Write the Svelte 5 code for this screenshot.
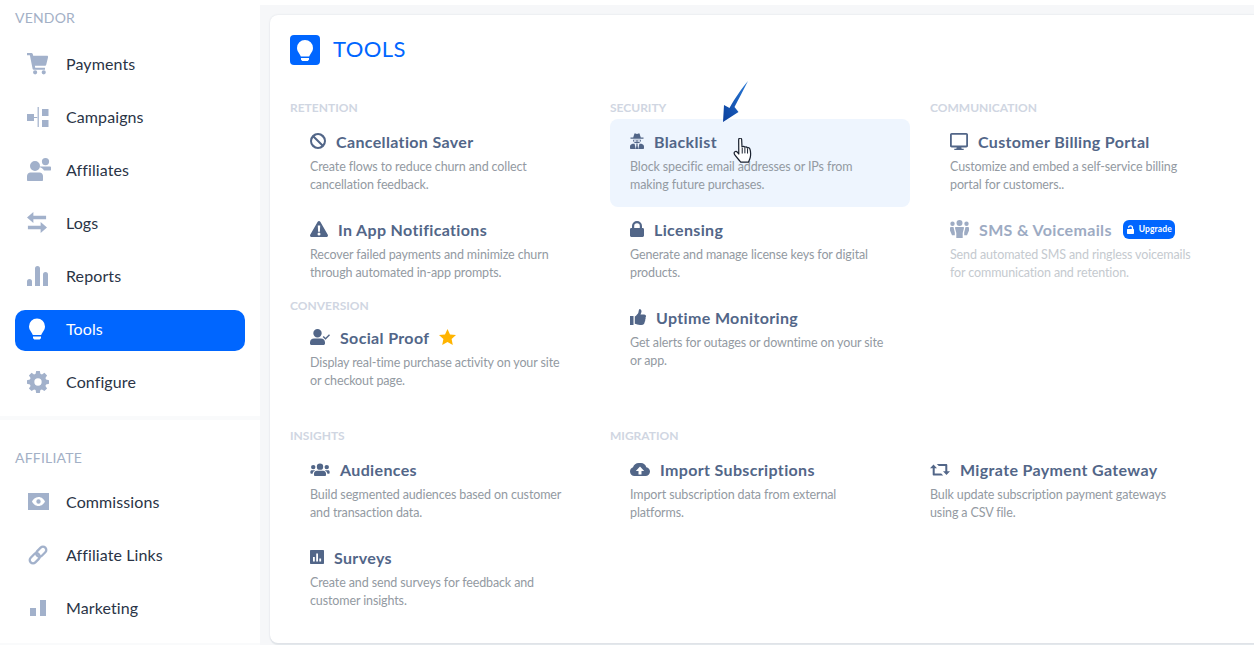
<script>
  const vendorNav = [
    { label: 'Payments', icon: 'cart' },
    { label: 'Campaigns', icon: 'campaigns' },
    { label: 'Affiliates', icon: 'people' },
    { label: 'Logs', icon: 'logs' },
    { label: 'Reports', icon: 'reports' },
    { label: 'Tools', icon: 'bulb', active: true },
    { label: 'Configure', icon: 'gear' }
  ];
  const affiliateNav = [
    { label: 'Commissions', icon: 'bill' },
    { label: 'Affiliate Links', icon: 'link' },
    { label: 'Marketing', icon: 'marketing' }
  ];

  const paths = {
    cart: 'M0 0h4.6c.7 0 1.2.4 1.4 1l.5 2H21c.7 0 1.2.7 1 1.4l-1.9 8c-.1.6-.6 1-1.2 1H8.2l.4 2h10.2v2H7c-.5 0-1-.3-1.1-.8L3 2.4H0z M8.5 18a2.2 2.2 0 1 0 0 4.4 2.2 2.2 0 0 0 0-4.4z M17.5 18a2.2 2.2 0 1 0 0 4.4 2.2 2.2 0 0 0 0-4.4z',
    campaigns: 'M0 7h7v7H0z M7 10h4v1H7z M10.6 0h1.2v20h-1.2z M15 2h6.5v7H15z M15 13h6.5v7H15z',
    people: 'M8 3a5 5 0 1 1 0 10A5 5 0 0 1 8 3z M3.5 14.5h9c2 0 3.5 1.6 3.5 3.5v4c0 .6-.4 1-1 1H1c-.6 0-1-.4-1-1v-4c0-1.9 1.6-3.5 3.5-3.5z M18.5 0a3.6 3.6 0 1 1 0 7.2 3.6 3.6 0 0 1 0-7.200z M13 8.500h10c.5 0 1 .4 1 1v2.500c0 .3-.2.500-.5.500H17c-.7-1.500-2.300-2.600-4-3.200z',
    logs: 'M7 0v4h14v4H7v4L0 6z M15 11l7 6-7 6v-4H1v-4h14z',
    reports: 'M2.500 13a2.500 2.500 0 0 1 2.500 2.500V20H0v-4.500A2.500 2.500 0 0 1 2.500 13z M10.500 0A2.500 2.500 0 0 1 13 2.500V20H8V2.500A2.500 2.500 0 0 1 10.500 0z M18.500 6A2.500 2.500 0 0 1 21 8.500V20h-5V8.500A2.500 2.500 0 0 1 18.500 6z',
    bulb: 'M8 0a8 8 0 0 1 8 8c0 2.300-1 3.800-2 5.200-.8 1.100-1.500 2.200-1.800 3.300H3.800c-.3-1.100-1-2.200-1.800-3.300C1 11.800 0 10.300 0 8a8 8 0 0 1 8-8z M4 18h8v1.200c0 .3-.1.500-.3.700l-1 1c-.2.100-.4.200-.7.200H6c-.3 0-.5-.1-.7-.2l-1-1c-.2-.2-.3-.4-.3-.7z',
    gear: 'M9 0h4l.6 3.100 1.700.7L18 2l2.900 2.900-1.800 2.700.7 1.700L23 10v4l-3.200.6-.7 1.700 1.800 2.700L18 21.900l-2.700-1.800-1.700.7L13 24H9l-.6-3.200-1.700-.7L4 21.900 1.100 19l1.800-2.700-.7-1.700L-1 14v-4l3.200-.7.700-1.700L1.100 4.900 4 2l2.700 1.800 1.700-.7z M11 8a4 4 0 1 0 0 8 4 4 0 0 0 0-8z',
    bill: 'M0 0h21v17H0z M10.500 4c-3.200 0-5.600 2.400-6.500 4.500.9 2.100 3.300 4.500 6.500 4.500s5.600-2.400 6.500-4.500C16.100 6.400 13.700 4 10.500 4z M10.500 6.300a2.200 2.200 0 1 1 0 4.400 2.200 2.200 0 0 1 0-4.400z',
    marketing: 'M0 8h6v8H0z M10 0h6v16h-6z',
    ban: 'M8 0a8 8 0 1 1 0 16A8 8 0 0 1 8 0z M4.670 3.250A5.800 5.800 0 0 1 12.750 11.330z M3.250 4.670A5.800 5.800 0 0 0 11.330 12.750z',
    warn: 'M9 0c.5 0 1 .3 1.300.8l7.500 13c.5 1-.2 2.200-1.300 2.200h-15C.4 16-.3 14.800.2 13.800L7.700.800C8 .3 8.500 0 9 0z M7.800 4.500l.3 6.200h1.800l.3-6.200z M9 11.500a1.500 1.500 0 1 0 0 3 1.500 1.500 0 0 0 0-3z',
    spy: 'M3.200 4.500L4.400.8c.1-.4.5-.6.9-.4L7 1l1.700-.6c.4-.2.8 0 .9.4l1.200 3.700h2.700v1.300H.5V4.500z M3 6.800h8c0 2.200-1.700 3.600-4 3.600S3 9 3 6.800z M4 7.300v1.400h2.500V7.300z M7.500 7.300v1.400H10V7.300z M2.600 10.800h2L5.700 16H1c-.6 0-1-.4-1-1v-1.500c0-1.200 1.100-2.200 2.600-2.700z M9.400 10.800h2c1.500.5 2.600 1.500 2.600 2.700V15c0 .6-.4 1-1 1H8.300z M6 11.200h2l-.4 1 .6 3.800H5.800l.6-3.800z',
    lock: 'M7 0a5 5 0 0 1 5 5v2h.7c.7 0 1.300.6 1.300 1.400v6.200c0 .8-.6 1.400-1.300 1.400H1.300C.6 16 0 15.400 0 14.600V8.400C0 7.600.6 7 1.300 7H2V5a5 5 0 0 1 5-5z M7 2.200A2.800 2.800 0 0 0 4.200 5v2h5.600V5A2.800 2.800 0 0 0 7 2.200z',
    thumb: 'M0 7h3.500v9H0z M9.500 0c1.200 0 2 1 2 2.300 0 1.100-.6 2.200-1 3.200h3.700c1 0 1.800.8 1.800 1.700 0 .6-.2 1-.5 1.400.3.900.1 1.600-.3 2.100.2.900 0 1.600-.6 2.200.1 1.500-.8 3.100-3.300 3.100H10c-2 0-3.800-1-5.200-1.200V7.400C6 6.800 7 5.500 8 4.400 8.800 3.400 8.400 1 9.500 0z',
    monitor: 'M1.700 0h14.600C17.200 0 18 .8 18 1.700v11c0 .9-.8 1.700-1.700 1.700h-5l.4 1.400h2v1.400H4.300v-1.400h2l.4-1.400h-5C.8 14.400 0 13.600 0 12.700v-11C0 .8.800 0 1.700 0z M1.800 1.800v10.800h14.400V1.800z',
    team: 'M9.500 0a3 3 0 1 1 0 6 3 3 0 0 1 0-6z M2.500 1.500a2.200 2.200 0 1 1 0 4.400 2.200 2.200 0 0 1 0-4.400z M16.500 1.500a2.200 2.200 0 1 1 0 4.400 2.200 2.200 0 0 1 0-4.400z M6 7h7c.6 0 1 .4 1 1l-1.300 5v5H6.300v-5L5 8c0-.6.400-1 1-1z M.500 7H3.500l1.300 5.500v2.700H2L0 10.500V8z M15.500 7h3l.500 1v2.500L17 15.200h-2.800v-2.700z',
    usercheck: 'M7.500 0a4.200 4.200 0 1 1 0 8.400A4.200 4.200 0 0 1 7.500 0z M4 9.500h7c2.200 0 4 1.700 4 3.900v1.100c0 .8-.7 1.500-1.500 1.500h-12C.7 16 0 15.300 0 14.500v-1.100c0-2.200 1.800-3.900 4-3.900z M19 5.300l1 1-4.500 4.400-2.800-2.800 1-1 1.800 1.800z',
    star: 'M8.500 0l2.500 5.400 6 .7-4.400 4 1.200 5.900-5.300-3-5.300 3 1.200-5.900L0 6.100l6-.7z',
    users: 'M10 1.500a3.300 3.300 0 1 1 0 6.600 3.300 3.300 0 0 1 0-6.600z M3 3a2.300 2.300 0 1 1 0 4.600A2.300 2.300 0 0 1 3 3z M17 3a2.300 2.300 0 1 1 0 4.600A2.300 2.300 0 0 1 17 3z M6.800 9h6.400c1.800 0 3 1.300 3 3v1.500c0 .5-.4 1-1 1H4.800c-.6 0-1-.5-1-1V12c0-1.700 1.200-3 3-3z M1.500 8.500h2.700c.3 0 .6.100.8.300-1.500.6-2.500 1.800-2.700 3.400H1c-.6 0-1-.4-1-1v-1.100c0-.9.600-1.600 1.500-1.600z M15.800 8.500h2.700c.9 0 1.500.7 1.500 1.600v1.100c0 .6-.4 1-1 1h-1.300c-.2-1.600-1.200-2.800-2.700-3.400.2-.2.500-.3.800-.3z',
    poll: 'M1 0h12c.6 0 1 .4 1 1v12c0 .6-.4 1-1 1H1c-.6 0-1-.4-1-1V1c0-.6.4-1 1-1z M3 7v4.500h1.800V7z M6.200 3.500v8H8v-8z M9.300 8.500v3h1.800v-3z',
    cloud: 'M11 0c2.500 0 4.700 1.700 5.300 4.200 2.100.3 3.700 2.100 3.700 4.300 0 2.500-2 4.500-4.500 4.500h-11C2 13 0 11 0 8.500c0-1.900 1.200-3.600 3-4.200C3.800 1.800 6 0 8.700 0z M10 3.500L5.800 8H8.500v3.500h3V8h2.700z',
    retweet: 'M3.500 1.500L7 5.300H4.700v5.200h6.500l2 2H3.800c-.6 0-1.100-.5-1.100-1.100V5.300H0z M6.800 1h9.400c.6 0 1.100.5 1.100 1.100v6.100H20l-3.500 3.800L13 8.200h2.300V3H8.800z',
    padlock: 'M4 0a3 3 0 0 1 3 3v1.500h.3c.4 0 .7.300.7.700v4c0 .4-.3.800-.7.800H.7C.3 10 0 9.600 0 9.200v-4c0-.4.300-.7.700-.7h4.800V3a1.500 1.500 0 0 0-3 0H1.100A2.900 2.900 0 0 1 4 0z'
  };

  const sections = [
    [
      { heading: 'RETENTION', items: [
        { title: 'Cancellation Saver', desc: 'Create flows to reduce churn and collect cancellation feedback.', icon: 'ban', w: 16, h: 16, vb: '0 0 16 16' },
        { title: 'In App Notifications', desc: 'Recover failed payments and minimize churn through automated in-app prompts.', icon: 'warn', w: 18, h: 16, vb: '0 0 18 16' }
      ] },
      { heading: 'CONVERSION', tight: true, items: [
        { title: 'Social Proof', desc: 'Display real-time purchase activity on your site or checkout page.', icon: 'usercheck', w: 20, h: 16, vb: '0 0 20 16', star: true }
      ] }
    ],
    [
      { heading: 'SECURITY', items: [
        { title: 'Blacklist', desc: 'Block specific email addresses or IPs from making future purchases.', icon: 'spy', w: 14, h: 16, vb: '0 0 14 16', hover: true },
        { title: 'Licensing', desc: 'Generate and manage license keys for digital products.', icon: 'lock', w: 14, h: 16, vb: '0 0 14 16' },
        { title: 'Uptime Monitoring', desc: 'Get alerts for outages or downtime on your site or app.', icon: 'thumb', w: 16, h: 16, vb: '0 0 16 16' }
      ] }
    ],
    [
      { heading: 'COMMUNICATION', items: [
        { title: 'Customer Billing Portal', desc: 'Customize and embed a self-service billing portal for customers..', icon: 'monitor', w: 18, h: 17, vb: '0 0 18 17' },
        { title: 'SMS & Voicemails', desc: 'Send automated SMS and ringless voicemails for communication and retention.', icon: 'team', w: 19, h: 18, vb: '0 0 19 18', locked: true }
      ] }
    ],
    [
      { heading: 'INSIGHTS', items: [
        { title: 'Audiences', desc: 'Build segmented audiences based on customer and transaction data.', icon: 'users', w: 20, h: 14, vb: '0 0 20 14.500' },
        { title: 'Surveys', desc: 'Create and send surveys for feedback and customer insights.', icon: 'poll', w: 14, h: 14, vb: '0 0 14 14' }
      ] }
    ],
    [
      { heading: 'MIGRATION', items: [
        { title: 'Import Subscriptions', desc: 'Import subscription data from external platforms.', icon: 'cloud', w: 20, h: 13, vb: '0 0 20 13' }
      ] }
    ],
    [
      { heading: '', shifted: true, items: [
        { title: 'Migrate Payment Gateway', desc: 'Bulk update subscription payment gateways using a CSV file.', icon: 'retweet', w: 20, h: 13, vb: '0 0 20 13' }
      ] }
    ]
  ];

  const navBoxes = {
    cart: '0 0 23 23', campaigns: '0 0 22 20', people: '0 0 24 23', logs: '0 0 22 23', reports: '0 0 21 20',
    bulb: '0 0 16 21', gear: '-1 0 24 24', bill: '0 0 21 17', link: '0 0 20 20', marketing: '0 0 16 16'
  };
  const navSizes = {
    cart: [22, 22], campaigns: [22, 20], people: [24, 23], logs: [20, 21], reports: [21, 20],
    bulb: [16, 22], gear: [22, 22], bill: [21, 17], link: [20, 20], marketing: [16, 16]
  };
</script>

{#snippet navItem(item)}
  <a class="nav-item" class:active={item.active} href="#{item.label}">
    <span class="nav-icon {item.icon}">
      <svg width={navSizes[item.icon][0]} height={navSizes[item.icon][1]} viewBox={navBoxes[item.icon]} fill="currentColor">
        {#if item.icon === 'link'}
          <g fill="none" stroke="currentColor" stroke-width="2.300">
            <rect x="1" y="10" width="11.500" height="6.600" rx="3.300" transform="rotate(-45 6.750 13.300)" />
            <rect x="7.500" y="3.400" width="11.500" height="6.600" rx="3.300" transform="rotate(-45 13.250 6.700)" />
          </g>
        {:else}
          <path fill-rule="evenodd" d={paths[item.icon]} />
        {/if}
      </svg>
    </span>
    {item.label}
  </a>
{/snippet}

<div class="page">
  <aside class="sidebar">
    <section class="side-group first">
      <h4>VENDOR</h4>
      <nav>
        {#each vendorNav as item}
          {@render navItem(item)}
        {/each}
      </nav>
    </section>
    <section class="side-group second">
      <h4>AFFILIATE</h4>
      <nav>
        {#each affiliateNav as item}
          {@render navItem(item)}
        {/each}
      </nav>
    </section>
  </aside>

  <main>
    <div class="topstrip"></div>
    <div class="card">
      <header>
        <span class="badge">
          <svg width="16" height="21" viewBox="0 0 16 21" fill="#fff"><path d={paths.bulb} /></svg>
        </span>
        <h1>TOOLS</h1>
      </header>

      <div class="grid">
        {#each sections as column}
          <div class="col">
            {#each column as group}
              <h5 class:tight={group.tight}>{group.heading}</h5>
              {#each group.items as tool}
                <div class="tool" class:hover={tool.hover} class:locked={tool.locked} class:shifted={group.shifted}>
                  <div class="tool-title">
                    <svg width={tool.w} height={tool.h} viewBox={tool.vb} fill="currentColor">
                      <path fill-rule="evenodd" d={paths[tool.icon]} />
                    </svg>
                    <span>{tool.title}</span>
                    {#if tool.star}
                      <svg class="star" width="17" height="16" viewBox="0 0 17 16" fill="#ffb400"><path d={paths.star} /></svg>
                    {/if}
                    {#if tool.locked}
                      <span class="upgrade">
                        <svg width="7" height="9" viewBox="0 0 8 10" fill="#fff"><path fill-rule="evenodd" d={paths.padlock} /></svg>
                        Upgrade
                      </span>
                    {/if}
                  </div>
                  <p>{tool.desc}</p>
                </div>
              {/each}
            {/each}
          </div>
        {/each}
      </div>
    </div>

    <!-- annotation arrow and pointer from the screenshot -->
    <svg class="arrow" width="30" height="46" viewBox="0 0 30 46">
      <defs>
        <linearGradient id="arrowFill" x1="1" y1="0" x2="0" y2="1">
          <stop offset="0" stop-color="#2a7bd8" />
          <stop offset="1" stop-color="#0b3f9c" />
        </linearGradient>
      </defs>
      <path d="M27 2C22 12 17 21 13.500 28L17.500 33 2 43 3 26 8.500 29C14 19 21 9 27 2z" fill="url(#arrowFill)" />
    </svg>
    <svg class="hand" width="20" height="25" viewBox="1 1 17 22.500">
      <path d="M6 1.500c.8-.8 2.200-.3 2.300 1l.3 6.500c1-.5 2-.4 2.500.3.900-.4 1.900-.2 2.300.6 1-.3 2 .1 2.300 1 .6 1.700.8 5 .4 7.400-.3 1.800-1 3-1.700 4.400H7.500c-1.500-1.800-4-4.500-5.500-6.700-.7-1.100-.6-2.200.2-2.700.9-.5 1.900 0 2.500.8l1 1.300L5.600 2.900c0-.6 0-1 .4-1.400z" fill="#fff" stroke="#1a2230" stroke-width="1.100" stroke-linejoin="round" />
      <path d="M8.800 10v5M11.200 9.800v5M13.600 10.400v4.600" fill="none" stroke="#1a2230" stroke-width=".9" />
    </svg>
  </main>
</div>

<style>
  :global(body) {
    background: #f6f7f9;
    overflow: hidden;
  }
  .page {
    display: flex;
    width: 1254px;
    height: 645px;
    overflow: hidden;
    font-family: Lato, "Open Sans", sans-serif;
  }
  .sidebar {
    width: 260px;
    flex: none;
    display: flex;
    flex-direction: column;
    gap: 4px;
    background: #f9fafb;
  }
  .side-group {
    background: #fff;
    padding-bottom: 12px;
  }
  .side-group.first { padding-top: 8px; }
  .side-group.second {
    padding-top: 28px;
    padding-bottom: 13px;
  }
  h4 {
    margin: 0 0 17px 15px;
    font-size: 14px;
    line-height: 20px;
    font-weight: 400;
    letter-spacing: 0.2px;
    color: #a3b0c6;
  }
  .second h4 { margin-bottom: 15px; }
  nav {
    display: flex;
    flex-direction: column;
    gap: 12px;
    padding: 0 15px;
  }
  .nav-item {
    display: flex;
    align-items: center;
    height: 41px;
    padding-left: 12px;
    padding-bottom: 4px;
    box-sizing: border-box;
    border-radius: 10px;
    font-size: 16px;
    letter-spacing: 0.1px;
    color: #2a3446;
    text-decoration: none;
  }
  .nav-icon {
    width: 24px;
    height: 24px;
    box-sizing: border-box;
    margin-right: 15px;
    display: flex;
    align-items: center;
    color: #a2b1cb;
  }
  .nav-icon.marketing { padding-left: 3px; }
  .nav-icon.bill,
  .nav-icon.link { padding-left: 1px; }
  .nav-item.active {
    background: #0066ff;
    color: #fff;
  }
  .nav-item.active .nav-icon {
    color: #fff;
    padding-left: 2px;
  }

  main {
    position: relative;
    flex: 1;
    padding: 0 5px 0 10px;
  }
  .topstrip {
    height: 5px;
    margin: 0 -5px 10px -10px;
    background: #fff;
  }
  .card {
    height: 628px;
    box-sizing: border-box;
    padding: 20px;
    background: #fff;
    border-radius: 8px;
    box-shadow: 0 0 2px #d9dde3, 0 2px 1px #e3e6ea;
  }
  header {
    display: flex;
    align-items: center;
    gap: 13px;
    height: 30px;
    margin-bottom: 32px;
  }
  .badge {
    width: 30px;
    height: 30px;
    border-radius: 4px;
    background: #0066ff;
    display: flex;
    align-items: center;
    justify-content: center;
  }
  h1 {
    margin: 0;
    padding-bottom: 4px;
    font-size: 22px;
    font-weight: 400;
    letter-spacing: 0.4px;
    color: #0066ff;
  }
  .grid {
    display: grid;
    grid-template-columns: repeat(3, 320px);
    row-gap: 22px;
  }
  h5 {
    margin: 0 0 2px;
    height: 20px;
    font-size: 12px;
    line-height: 22px;
    font-weight: 700;
    color: #d0d6e2;
  }
  h5.tight { margin-bottom: 0; }
  .tool {
    width: 300px;
    height: 88px;
    box-sizing: border-box;
    padding: 12px 20px 0;
    border-radius: 8px;
  }
  .tool.hover { background: #eef5fe; }
  .tool.shifted { margin-left: -20px; }
  .tool-title {
    display: flex;
    align-items: center;
    gap: 10px;
    height: 20px;
    font-size: 16px;
    font-weight: 700;
    letter-spacing: 0.35px;
    color: #526688;
  }
  .tool p {
    margin: 7px 0 0;
    max-width: 255px;
    font-size: 12.500px;
    line-height: 18px;
    letter-spacing: -0.12px;
    color: #939aa2;
  }
  .tool.locked .tool-title { color: #9dabc3; }
  .tool.locked p { color: #c5cacf; }
  .upgrade {
    display: flex;
    align-items: center;
    gap: 5px;
    height: 19px;
    margin-left: 1px;
    padding: 0 3px 0 4px;
    border-radius: 6px;
    background: #0066ff;
    font-size: 8.500px;
    letter-spacing: 0.1px;
    color: #fff;
  }
  .arrow {
    position: absolute;
    left: 461px;
    top: 79px;
  }
  .hand {
    position: absolute;
    left: 473px;
    top: 138px;
  }
</style>
